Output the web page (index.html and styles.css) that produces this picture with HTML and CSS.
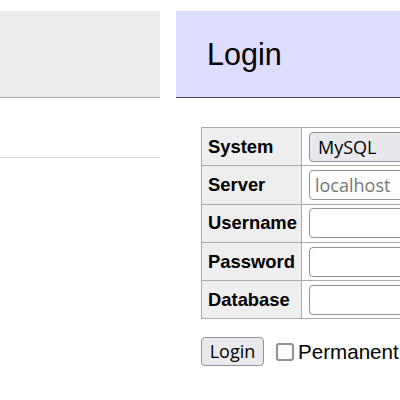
FILE: index.html
```
<!DOCTYPE html>
<html>
<head>
<meta charset="utf-8">
<link rel="stylesheet" href="styles.css">
</head>
<body>
<div class="page">
  <div class="menu">
    <div class="menu-head"></div>
    <div class="menu-sep"></div>
  </div>
  <div class="content">
    <h2 class="title">Login</h2>
    <form class="login">
      <table class="fields">
        <tr><th>System</th><td><div class="select">MySQL</div></td></tr>
        <tr><th>Server</th><td><div class="input placeholder">localhost</div></td></tr>
        <tr><th>Username</th><td><div class="input"></div></td></tr>
        <tr><th>Password</th><td><div class="input"></div></td></tr>
        <tr><th>Database</th><td><div class="input"></div></td></tr>
      </table>
      <div class="actions">
        <span class="button">Login</span>
        <label class="perm"><span class="checkbox"></span>Permanent</label>
      </div>
    </form>
  </div>
</div>
</body>
</html>
```
FILE: styles.css
```
html, body {
  margin: 0;
  padding: 0;
  background: #fff;
  overflow: hidden;
}
body {
  font-family: "Liberation Sans", Arial, sans-serif;
  color: #000;
}
.page {
  display: flex;
  padding-top: 11px;
  width: 700px;
}
.menu {
  width: 160px;
  flex: none;
}
.menu-head {
  height: 86px;
  background: #ececec;
  border-bottom: 1px solid #aaa;
}
.menu-sep {
  margin-top: 59px;
  border-top: 1px solid #ddd;
}
.content {
  margin-left: 16px;
  flex: 1;
}
.title {
  margin: 0;
  padding: 25px 31px;
  font-size: 30.5px;
  line-height: 36px;
  font-weight: normal;
  background: #ddf;
  border-bottom: 1px solid #444;
}
.login {
  margin: 29px 0 0 25px;
}
.fields {
  border-collapse: collapse;
}
.fields th, .fields td {
  border: 1px solid #aaa;
  height: 38.3px;
  box-sizing: border-box;
}
.fields th {
  background: #eee;
  text-align: left;
  font-size: 18.4px;
  font-weight: bold;
  width: 100px;
  padding: 0 4px 0 6px;
}
.fields td {
  padding: 0 6px 0 7px;
}
.select, .input {
  width: 240px;
  height: 30px;
  box-sizing: border-box;
  border: 1px solid #8f8f9d;
  border-radius: 4px;
  font-family: "Open Sans", sans-serif;
  font-size: 18px;
  line-height: 28px;
  padding: 0 5px;
}
.select {
  background: #e9e9ed;
  padding-left: 8px;
}
.input {
  background: #fff;
}
.placeholder {
  color: #777;
}
.actions {
  display: flex;
  align-items: center;
  margin-top: 18px;
}
.button {
  display: inline-block;
  height: 29px;
  width: 63px;
  box-sizing: border-box;
  border: 1px solid #8f8f9d;
  border-radius: 4px;
  background: #e9e9ed;
  font-family: "Open Sans", sans-serif;
  font-size: 18px;
  line-height: 27px;
  text-align: center;
}
.perm {
  display: flex;
  align-items: center;
  margin-left: 12px;
  font-size: 20.6px;
}
.checkbox {
  display: inline-block;
  width: 18px;
  height: 18px;
  box-sizing: border-box;
  border: 2px solid #8f8f9d;
  border-radius: 3px;
  margin-right: 4px;
}
```
